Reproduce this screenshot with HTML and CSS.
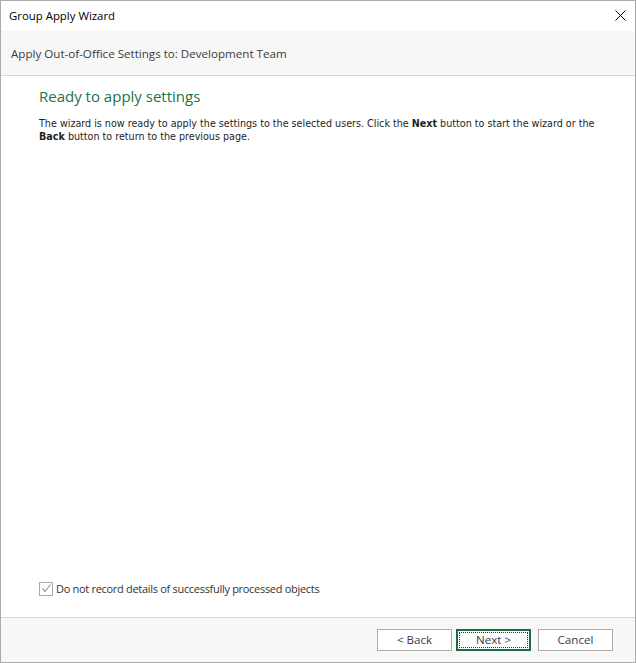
FILE: index.html
```html
<!DOCTYPE html>
<html>
<head>
<meta charset="utf-8">
<link rel="stylesheet" href="styles.css">
</head>
<body>
<div class="window">
  <div class="titlebar">
    <span class="title">Group Apply Wizard</span>
    <span class="close">
      <svg width="11" height="11" viewBox="0 0 11 11"><path d="M0.5 0.5 L10.5 10.5 M10.5 0.5 L0.5 10.5" stroke="#000" stroke-width="1" fill="none"/></svg>
    </span>
  </div>
  <div class="header">Apply Out-of-Office Settings to: Development Team</div>
  <div class="content">
    <h1 class="heading">Ready to apply settings</h1>
    <p class="desc">The wizard is now ready to apply the settings to the selected users. Click the <b>Next</b> button to start the wizard or the<br><b>Back</b> button to return to the previous page.</p>
    <div class="spacer"></div>
    <label class="check">
      <span class="box">
        <svg width="11" height="11" viewBox="0 0 11 11"><path d="M1.5 5.5 L4 8.5 L9.5 1.5" stroke="#9a9a9a" stroke-width="1.2" fill="none"/></svg>
      </span>
      <span class="check-label">Do not record details of successfully processed objects</span>
    </label>
  </div>
  <div class="footer">
    <button class="btn">&lt; Back</button>
    <button class="btn btn-primary"><span class="focus">Next &gt;</span></button>
    <button class="btn btn-cancel">Cancel</button>
  </div>
</div>
</body>
</html>
```
FILE: styles.css
```css
* { box-sizing: border-box; }
html, body { margin: 0; padding: 0; background: #fff; }
body { font-family: "Open Sans", "Noto Sans", sans-serif; }
.window {
  width: 636px;
  height: 663px;
  border: 1px solid #ababab;
  display: flex;
  flex-direction: column;
  background: #fff;
}
.titlebar {
  height: 30px;
  display: flex;
  align-items: center;
  justify-content: space-between;
  padding: 0 9px 2px 8px;
  background: #fff;
}
.title { font-size: 11.4px; color: #000; }
.close { width: 11px; height: 11px; display: flex; margin-top: 1px; }
.header {
  height: 45px;
  background: #f7f7f7;
  border-bottom: 1px solid #d6d6d6;
  padding: 0 10px;
  display: flex;
  align-items: center;
  font-size: 11.6px;
  color: #3b3b3b;
}
.content {
  flex: 1;
  display: flex;
  flex-direction: column;
  padding: 10px 20px 21px 38px;
}
.heading {
  margin: 0;
  font-weight: normal;
  font-size: 15px;
  color: #217346;
  line-height: 20px;
}
.desc {
  margin: 11px 0 0 0;
  font-family: "DejaVu Sans Condensed", "DejaVu Sans", sans-serif;
  font-size: 10.67px;
  line-height: 13px;
  color: #1e1e1e;
}
.desc b { font-weight: bold; }
.spacer { flex: 1; }
.check {
  display: flex;
  align-items: center;
  gap: 3px;
  font-size: 11px;
  color: #333;
  letter-spacing: -0.3px;
}
.box {
  width: 14px;
  height: 14px;
  border: 1px solid #a8a8a8;
  background: #fff;
  display: flex;
  align-items: center;
  justify-content: center;
}
.footer {
  height: 45px;
  background: #f7f7f7;
  border-top: 1px solid #d6d6d6;
  display: flex;
  align-items: center;
  justify-content: flex-end;
  padding: 0 22px 0 0;
  gap: 4px;
}
.btn {
  width: 75px;
  height: 22px;
  border: 1px solid #adadad;
  background: #fff;
  font-family: "Open Sans", "Noto Sans", sans-serif;
  font-size: 11.6px;
  color: #3b3b4b;
  padding: 0 0 2px 0;
  display: flex;
  align-items: center;
  justify-content: center;
}
.btn-primary {
  border: 2px solid #1e6b40;
  padding: 1px;
}
.focus {
  width: 100%;
  height: 100%;
  border: 1px dotted #333;
  display: flex;
  align-items: center;
  justify-content: center;
  padding-bottom: 2px;
}
.btn-cancel { margin-left: 3px; }
```
